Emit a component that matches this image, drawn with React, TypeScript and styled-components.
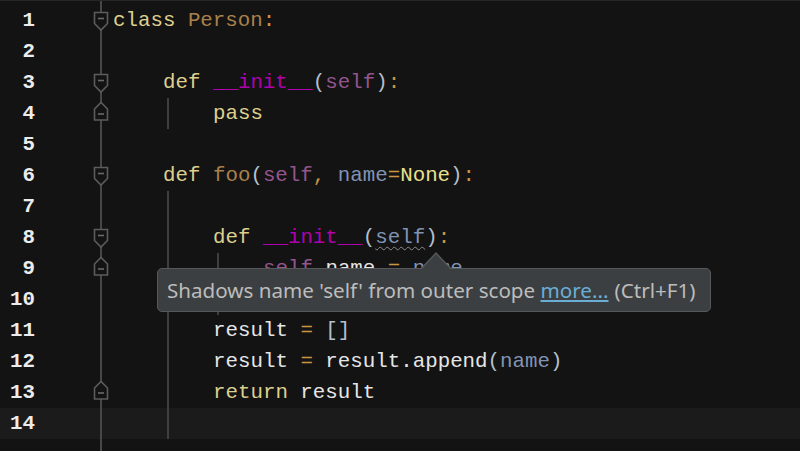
import React from 'react';
import styled, { createGlobalStyle } from 'styled-components';

const COLORS = {
  bg: '#131313',
  currentLine: '#1b1b1b',
  gutterLine: '#474747',
  guide: '#3f3f3f',
  number: '#ececec',
  keyword: '#ddd08e',
  className: '#a9814b',
  magic: '#b000b0',
  self: '#94558d',
  param: '#8193b3',
  constant: '#e9e08e',
  op: '#cc9444',
  punct: '#b4c0cc',
  plain: '#e6e6e6',
  tipBg: '#3c3f41',
  tipBorder: '#56595b',
  tipText: '#bcbcbc',
  link: '#6aaed6',
};

const GlobalStyle = createGlobalStyle`
  html, body {
    margin: 0;
    padding: 0;
    background: ${COLORS.bg};
  }
`;

const Editor = styled.div`
  position: relative;
  width: 800px;
  height: 451px;
  overflow: hidden;
  padding-top: 4px;
  box-sizing: border-box;
  border-top: 1px solid #262626;
  background:
    linear-gradient(${COLORS.gutterLine}, ${COLORS.gutterLine}) 100px 0 / 2px 100% no-repeat,
    ${COLORS.bg};
  font-family: 'Courier New', 'Nimbus Mono PS', 'FreeMono', 'Liberation Mono', monospace;
  font-size: 20.8px;
`;

const Row = styled.div<{ $current?: boolean }>`
  display: grid;
  grid-template-columns: 35px 54px 24px 1fr;
  height: 31px;
  align-items: stretch;
  background: ${(p) => (p.$current ? COLORS.currentLine : 'transparent')};
`;

const LineNumber = styled.div`
  display: flex;
  align-items: center;
  justify-content: flex-end;
  color: ${COLORS.number};
  font-weight: bold;
`;

const Spacer = styled.div``;

const FoldCell = styled.div`
  display: flex;
  align-items: flex-start;
  justify-content: center;
  background: linear-gradient(${COLORS.gutterLine}, ${COLORS.gutterLine}) 11px 0 / 2px 100% no-repeat;
  padding-top: 6px;
  box-sizing: border-box;
`;

const Code = styled.div`
  display: flex;
  align-items: stretch;
  white-space: pre;
`;

const Indent = styled.span<{ $guide?: boolean }>`
  flex: 0 0 50px;
  background: ${(p) =>
    p.$guide
      ? `linear-gradient(${COLORS.guide}, ${COLORS.guide}) 4px 0 / 2px 100% no-repeat`
      : 'none'};
`;

const Text = styled.span`
  align-self: center;
  color: ${COLORS.plain};
`;

const Tok = styled.span<{ $c: keyof typeof COLORS; $wavy?: boolean }>`
  color: ${(p) => COLORS[p.$c]};
  ${(p) =>
    p.$wavy &&
    `text-decoration: underline wavy #8a8a8a; text-decoration-thickness: 1px; text-underline-offset: 3px;`}
`;

const Tooltip = styled.div`
  position: absolute;
  left: 157px;
  top: 267px;
  width: 554px;
  height: 44px;
  box-sizing: border-box;
  padding: 0 0 1px 9px;
  display: flex;
  align-items: center;
  background: ${COLORS.tipBg};
  border: 1px solid ${COLORS.tipBorder};
  border-radius: 5px;
  color: ${COLORS.tipText};
  font-family: 'Noto Sans', 'Open Sans', sans-serif;
  font-size: 20.6px;
  white-space: nowrap;

  &::before {
    content: '';
    position: absolute;
    left: 262px;
    top: -17px;
    border-left: 16px solid transparent;
    border-right: 16px solid transparent;
    border-bottom: 17px solid ${COLORS.tipBorder};
  }

  &::after {
    content: '';
    position: absolute;
    left: 263px;
    top: -15px;
    border-left: 15px solid transparent;
    border-right: 15px solid transparent;
    border-bottom: 16px solid ${COLORS.tipBg};
  }
`;

const Link = styled.span`
  color: ${COLORS.link};
  text-decoration: underline;
  margin-right: 6px;
`;

type FoldKind = 'start' | 'end' | undefined;

function FoldMarker({ kind }: { kind: FoldKind }) {
  if (!kind) return null;
  const d = kind === 'start' ? 'M1.5 1.5 H14.5 V12.5 L8 19 L1.5 12.5 Z' : 'M1.5 19 H14.5 V8 L8 1.5 L1.5 8 Z';
  const y = kind === 'start' ? 7.5 : 13;
  return (
    <svg width="16" height="21" viewBox="0 0 16 21" style={{ marginTop: kind === 'end' ? -3 : 0 }}>
      <path d={d} fill={COLORS.bg} stroke="#5c5c5c" strokeWidth="1.6" />
      <line x1="5" x2="11" y1={y} y2={y} stroke="#6a6a6a" strokeWidth="1.6" />
    </svg>
  );
}

type Line = {
  fold?: FoldKind;
  indents: boolean[];
  code?: React.ReactNode;
  current?: boolean;
};

const lines: Line[] = [
  {
    fold: 'start',
    indents: [],
    code: (
      <>
        <Tok $c="keyword">class</Tok> <Tok $c="className">Person</Tok>
        <Tok $c="op">:</Tok>
      </>
    ),
  },
  { indents: [] },
  {
    fold: 'start',
    indents: [false],
    code: (
      <>
        <Tok $c="keyword">def</Tok> <Tok $c="magic">__init__</Tok>
        <Tok $c="punct">(</Tok>
        <Tok $c="self">self</Tok>
        <Tok $c="punct">)</Tok>
        <Tok $c="op">:</Tok>
      </>
    ),
  },
  { fold: 'end', indents: [false, true], code: <Tok $c="keyword">pass</Tok> },
  { indents: [] },
  {
    fold: 'start',
    indents: [false],
    code: (
      <>
        <Tok $c="keyword">def</Tok> <Tok $c="className">foo</Tok>
        <Tok $c="punct">(</Tok>
        <Tok $c="self">self</Tok>
        <Tok $c="op">,</Tok> <Tok $c="param">name</Tok>
        <Tok $c="op">=</Tok>
        <Tok $c="constant">None</Tok>
        <Tok $c="punct">)</Tok>
        <Tok $c="op">:</Tok>
      </>
    ),
  },
  { indents: [false, true] },
  {
    fold: 'start',
    indents: [false, true],
    code: (
      <>
        <Tok $c="keyword">def</Tok> <Tok $c="magic">__init__</Tok>
        <Tok $c="punct">(</Tok>
        <Tok $c="param" $wavy>
          self
        </Tok>
        <Tok $c="punct">)</Tok>
        <Tok $c="op">:</Tok>
      </>
    ),
  },
  {
    fold: 'end',
    indents: [false, true, true],
    code: (
      <>
        <Tok $c="self">self</Tok>.name <Tok $c="op">=</Tok> <Tok $c="param">name</Tok>
      </>
    ),
  },
  { indents: [false, true, true] },
  {
    indents: [false, true],
    code: (
      <>
        result <Tok $c="op">=</Tok> <Tok $c="punct">[]</Tok>
      </>
    ),
  },
  {
    indents: [false, true],
    code: (
      <>
        result <Tok $c="op">=</Tok> result.append<Tok $c="punct">(</Tok>
        <Tok $c="param">name</Tok>
        <Tok $c="punct">)</Tok>
      </>
    ),
  },
  {
    fold: 'end',
    indents: [false, true],
    code: (
      <>
        <Tok $c="keyword">return</Tok> result
      </>
    ),
  },
  { indents: [false, true], current: true },
];

export default function App() {
  return (
    <>
      <GlobalStyle />
      <Editor>
        {lines.map((line, i) => (
          <Row key={i} $current={line.current}>
            <LineNumber>{i + 1}</LineNumber>
            <Spacer />
            <FoldCell>
              <FoldMarker kind={line.fold} />
            </FoldCell>
            <Code>
              {line.indents.map((g, j) => (
                <Indent key={j} $guide={g} />
              ))}
              {line.code && <Text>{line.code}</Text>}
            </Code>
          </Row>
        ))}
        <Tooltip>
          Shadows name 'self' from outer scope&nbsp;<Link>more...</Link>(Ctrl+F1)
        </Tooltip>
      </Editor>
    </>
  );
}
